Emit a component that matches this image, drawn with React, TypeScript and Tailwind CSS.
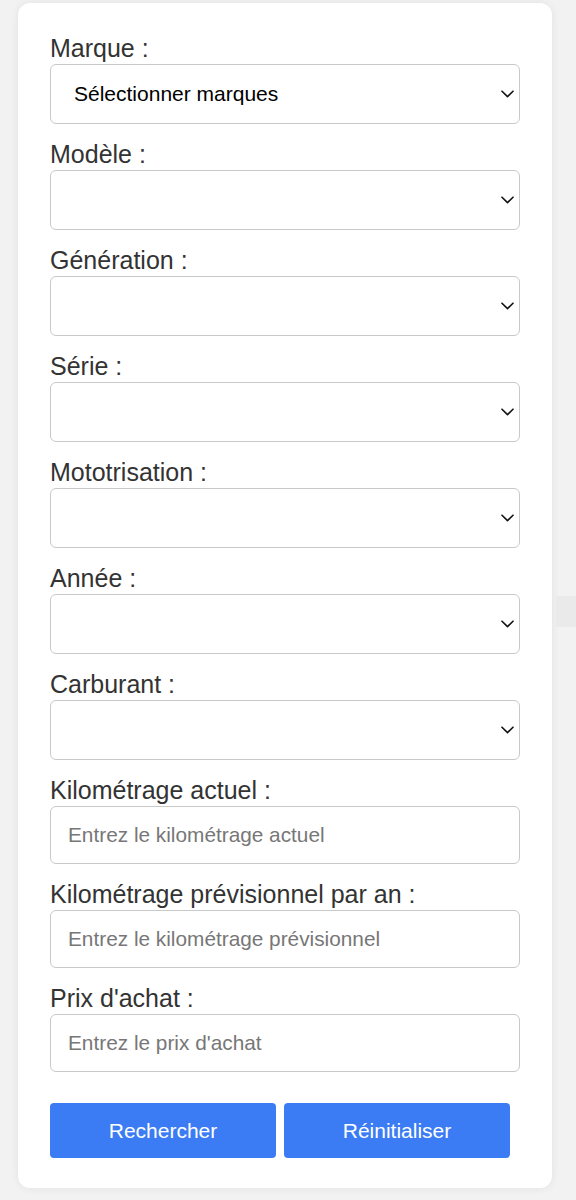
import React from "react";

// Formulaire de recherche véhicule

const selects = [
  { label: "Marque :", value: "Sélectionner marques" },
  { label: "Modèle :", value: "" },
  { label: "Génération :", value: "" },
  { label: "Série :", value: "" },
  { label: "Mototrisation :", value: "" },
  { label: "Année :", value: "" },
  { label: "Carburant :", value: "" },
];

const inputs = [
  { label: "Kilométrage actuel :", placeholder: "Entrez le kilométrage actuel" },
  { label: "Kilométrage prévisionnel par an :", placeholder: "Entrez le kilométrage prévisionnel" },
  { label: "Prix d'achat :", placeholder: "Entrez le prix d'achat" },
];

function Chevron() {
  return (
    <svg width="13" height="8" viewBox="0 0 13 8" fill="none" className="pointer-events-none absolute right-[6px] top-1/2 -translate-y-1/2">
      <path d="M1 1.2 L6.5 6.6 L12 1.2" stroke="#111" strokeWidth="1.6" strokeLinecap="round" strokeLinejoin="round" />
    </svg>
  );
}

function SelectField({ label, value }: { label: string; value: string }) {
  return (
    <div className="mb-[17px]">
      <label className="mb-[2px] block text-[25px] leading-[27px] text-[#333]">{label}</label>
      <div className="relative">
        <select
          defaultValue={value}
          className="block h-[60px] w-full appearance-none rounded-[6px] border border-[#c9c9c9] bg-white pl-[23px] text-[21px] text-black outline-none"
        >
          <option value={value}>{value}</option>
        </select>
        <Chevron />
      </div>
    </div>
  );
}

function InputField({ label, placeholder }: { label: string; placeholder: string }) {
  return (
    <div className="mb-[17px]">
      <label className="mb-[2px] block text-[25px] leading-[27px] text-[#333]">{label}</label>
      <input
        type="text"
        placeholder={placeholder}
        className="block h-[58px] w-full rounded-[6px] border border-[#c9c9c9] bg-white pl-[17px] text-[20.8px] text-black outline-none placeholder:text-[#777]"
      />
    </div>
  );
}

export default function App() {
  return (
    <div className="flex min-h-[1200px] w-[576px] bg-[#f2f2f2] pl-[18px] pt-[3px] font-['Liberation_Sans',Arial,sans-serif]">
      <div className="h-[1185px] w-[534px] rounded-[12px] bg-white px-[32px] pt-[32px] shadow-[0_0_10px_rgba(0,0,0,0.07)]">
        {selects.map((s) => (
          <SelectField key={s.label} label={s.label} value={s.value} />
        ))}
        {inputs.map((i) => (
          <InputField key={i.label} label={i.label} placeholder={i.placeholder} />
        ))}
        <div className="mt-[31px] flex gap-[8px]">
          <button className="h-[55px] w-[226px] rounded-[4px] bg-[#3b7cf4] text-[21px] text-white">Rechercher</button>
          <button className="h-[55px] w-[226px] rounded-[4px] bg-[#3b7cf4] text-[21px] text-white">Réinitialiser</button>
        </div>
      </div>
      <div className="ml-[4px] mt-[593px] h-[31px] w-[20px] bg-[#eaeaea]" />
    </div>
  );
}
